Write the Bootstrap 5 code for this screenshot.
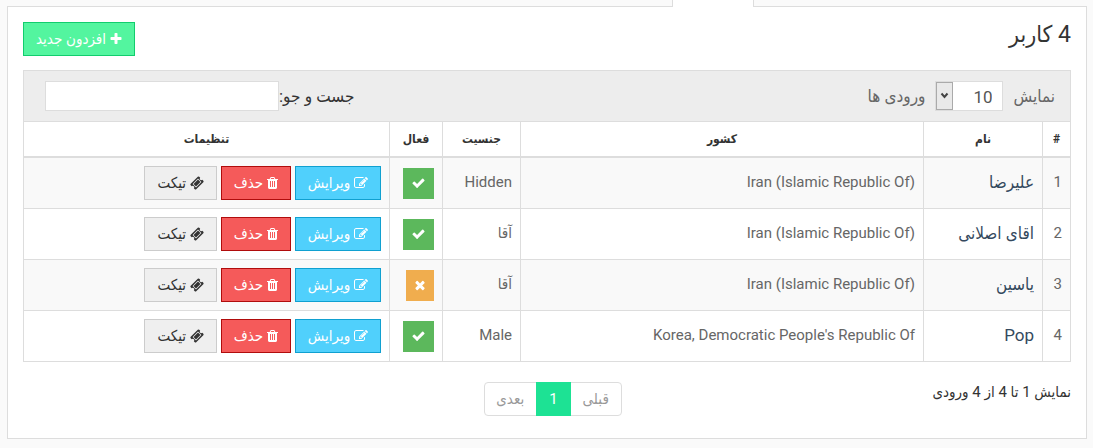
<!DOCTYPE html>
<html lang="fa" dir="rtl">
<head>
<meta charset="utf-8">
<meta name="viewport" content="width=device-width, initial-scale=1">
<title>کاربران</title>
<link href="https://cdn.jsdelivr.net/npm/bootstrap@5.3.0/dist/css/bootstrap.min.css" rel="stylesheet">
<style>
body { font-family: Roboto, "DejaVu Sans Condensed", "DejaVu Sans", sans-serif; font-size: 15px; line-height: 20px; color: #333; background: #fafafa; }
.tab-strip { height: 7px; padding-right: 339px; margin-bottom: -1px; position: relative; }
.tab-strip a { display: block; width: 82px; background: #fff; border: solid #ddd; border-width: 0 1px; }
.panel { border: 1px solid #ddd; background: #fff; padding: 10px 15px 22px; margin: 0 6px 9px 7px; }
.panel h1 { font-size: 23px; line-height: 34px; font-weight: 400; }
.ico { height: 14px; fill: currentColor; vertical-align: -2px; }
.btn { --bs-btn-border-radius: 0; --bs-btn-padding-x: 12px; --bs-btn-padding-y: 6px; --bs-btn-font-size: 15px; --bs-btn-line-height: 20px; height: 34px; white-space: nowrap; }
.btn-add { --bs-btn-color: #fff; --bs-btn-bg: #53f59f; --bs-btn-border-color: #11cd6d; --bs-btn-hover-color: #fff; --bs-btn-hover-bg: #2fe585; }
.btn-edit { --bs-btn-color: #fff; --bs-btn-bg: #50d0fc; --bs-btn-border-color: #10a0d0; --bs-btn-hover-color: #fff; --bs-btn-hover-bg: #2bbff0; }
.btn-del { --bs-btn-color: #fff; --bs-btn-bg: #f55a5a; --bs-btn-border-color: #b00c0c; --bs-btn-hover-color: #fff; --bs-btn-hover-bg: #e03c3c; }
.btn-tick { --bs-btn-color: #333; --bs-btn-bg: #efefef; --bs-btn-border-color: #ccc; --bs-btn-hover-bg: #e0e0e0; }
.head-row { padding: 1px 0 14px; }
.head-row .btn { margin-top: 4px; }
.filters { background: #ededed; border: 1px solid #ddd; border-bottom: 0; padding: 10px 15px 10px 21px; font-size: 17px; }
.filters .length-label { color: #666; }
.filters select, .filters input { height: 30px; border: 1px solid #ddd; background-color: #fff; color: #555; }
.filters select { appearance: none; width: 68px; margin: 0 10px; padding: 2px 10px 0; font-size: 17px; background-repeat: no-repeat; background-position: left top; background-size: 17px 28px;
 background-image: url("data:image/svg+xml,%3Csvg xmlns='http://www.w3.org/2000/svg' width='17' height='28'%3E%3Crect x='.5' y='.5' width='16' height='27' fill='%23e9e9e9' stroke='%23aaa'/%3E%3Cpath d='M5.5 11.5l3 3.5 3-3.5' fill='none' stroke='%23444' stroke-width='2'/%3E%3C/svg%3E"); }
.filters input { width: 234px; }
.users { --bs-table-striped-bg: #f9f9f9; --bs-table-color: #666; --bs-table-striped-color: #666; --bs-table-bg: #fff; table-layout: fixed; min-width: 900px; border-color: #ddd; }
.users th, .users td { padding: 8px; border: 1px solid #ddd; }
.users thead th { text-align: center; font-size: 12px; line-height: 18px; padding: 8px 4px; border-bottom-width: 2px; color: #333; }
.users tbody td { line-height: 32px; height: 51px; }
.users .num { padding-left: 0; }
.c-num { width: 28px; } .c-name { width: 119px; } .c-sex { width: 78px; } .c-on { width: 53px; } .c-act { width: 366px; }
.users a.person { color: #34495e; font-size: 17px; text-decoration: none; }
.state { display: block; width: fit-content; height: 31px; padding: 0 8px; margin-top: 2px; color: #fff; line-height: 30px; }
.state.on { background: #5cb85c; } .state.off { background: #f0ad4e; }
.foot { --bs-gutter-x: 30px; }
.pagination { --bs-pagination-color: #999; --bs-pagination-font-size: 15px; --bs-pagination-padding-x: 12px; --bs-pagination-padding-y: 6px; border: 1px solid #ddd; border-radius: 4px; width: fit-content; }
.pagination .page-link { border-width: 0; border-radius: 0; margin: 0; background: none; }
.pagination .active .page-link { background: #1de294; border: 1px solid #1de294; margin: -1px 0; }
</style>
</head>
<body>
<svg class="d-none">
<symbol id="check" viewBox="0 0 1792 1792"><path d="M1671 566q0 40-28 68l-724 724-136 136q-28 28-68 28t-68-28l-136-136-362-362q-28-28-28-68t28-68l136-136q28-28 68-28t68 28l294 295 656-657q28-28 68-28t68 28l136 136q28 28 28 68z"/></symbol>
<symbol id="times" viewBox="192 0 1408 1792"><path d="M1490 1322q0 40-28 68l-136 136q-28 28-68 28t-68-28l-294-294-294 294q-28 28-68 28t-68-28l-136-136q-28-28-28-68t28-68l294-294-294-294q-28-28-28-68t28-68l136-136q28-28 68-28t68 28l294 294 294-294q28-28 68-28t68 28l136 136q28 28 28 68t-28 68l-294 294 294 294q28 28 28 68z"/></symbol>
<symbol id="plus" viewBox="192 0 1408 1792"><path d="M1600 736v192q0 40-28 68t-68 28h-416v416q0 40-28 68t-68 28h-192q-40 0-68-28t-28-68v-416h-416q-40 0-68-28t-28-68v-192q0-40 28-68t68-28h416v-416q0-40 28-68t68-28h192q40 0 68 28t28 68v416h416q40 0 68 28t28 68z"/></symbol>
<symbol id="edit" viewBox="0 0 1792 1792"><path d="M888 1184l116-116-152-152-116 116v56h96v96h56zm440-720q-16-16-33 1l-350 350q-17 17-1 33t33-1l350-350q17-17 1-33zm80 594v190q0 119-84.5 203.5t-203.5 84.5h-832q-119 0-203.5-84.5t-84.5-203.5v-832q0-119 84.5-203.5t203.5-84.5h832q63 0 117 25 15 7 18 23 3 17-9 29l-49 49q-14 14-32 8-23-6-45-6h-832q-66 0-113 47t-47 113v832q0 66 47 113t113 47h832q66 0 113-47t47-113v-126q0-13 9-22l64-64q15-15 35-7t20 29zm-96-738l288 288-672 672h-288v-288zm444 132l-92 92-288-288 92-92q28-28 68-28t68 28l152 152q28 28 28 68t-28 68z"/></symbol>
<symbol id="trash" viewBox="192 0 1408 1792"><path d="M704 1376v-704q0-14-9-23t-23-9h-64q-14 0-23 9t-9 23v704q0 14 9 23t23 9h64q14 0 23-9t9-23zm256 0v-704q0-14-9-23t-23-9h-64q-14 0-23 9t-9 23v704q0 14 9 23t23 9h64q14 0 23-9t9-23zm256 0v-704q0-14-9-23t-23-9h-64q-14 0-23 9t-9 23v704q0 14 9 23t23 9h64q14 0 23-9t9-23zm-544-992h448l-48-117q-7-9-17-11h-317q-10 2-17 11zm928 32v64q0 14-9 23t-23 9h-96v948q0 83-47 143.5t-113 60.5h-832q-66 0-113-58.5t-47-141.5v-952h-96q-14 0-23-9t-9-23v-64q0-14 9-23t23-9h309l70-167q15-37 54-63t79-26h320q40 0 79 26t54 63l70 167h309q14 0 23 9t9 23z"/></symbol>
<symbol id="ticket" viewBox="0 0 1792 1792"><path d="M1024 452l316 316-572 572-316-316zm-211 979l618-618q19-19 19-45t-19-45l-362-362q-18-18-45-18t-45 18l-618 618q-19 19-19 45t19 45l362 362q18 18 45 18t45-18zm889-637l-907 908q-37 37-90.5 37t-90.5-37l-126-125q56-56 56-136t-56-136-136-56-136 56l-125-126q-37-37-37-90.5t37-90.5l907-906q37-37 90.5-37t90.5 37l125 125q-56 56-56 136t56 136 136 56 136-56l126 125q37 37 37 90.5t-37 90.5z"/></symbol>
</svg>
<nav class="tab-strip d-flex" aria-label="زبانه‌ها"><a href="#users" aria-label="کاربران"></a></nav>
<main class="panel" id="users">
  <header class="head-row d-flex justify-content-between align-items-start">
    <h1 class="mb-0">4 کاربر</h1>
    <button type="button" class="btn btn-add"><svg class="ico" width="12"><use href="#plus"/></svg> افزدون جدید</button>
  </header>
  <div class="filters d-flex justify-content-between align-items-center">
    <label class="length-label d-flex align-items-center">نمایش <select aria-label="تعداد"><option>10</option><option>25</option><option>50</option></select> ورودی ها</label>
    <label class="d-flex align-items-center">جست و جو:<input type="search"></label>
  </div>
  <div class="table-responsive">
  <table class="table table-striped users mb-0">
    <colgroup><col class="c-num"><col class="c-name"><col><col class="c-sex"><col class="c-on"><col class="c-act"></colgroup>
    <thead><tr><th>#</th><th>نام</th><th>کشور</th><th>جنسیت</th><th>فعال</th><th>تنظیمات</th></tr></thead>
    <tbody>
      <tr><td class="num">1</td><td><a class="person" href="#">علیرضا</a></td><td><bdi>Iran (Islamic Republic Of)</bdi></td><td>Hidden</td>
        <td><span class="state on"><svg class="ico" width="15"><use href="#check"/></svg></span></td>
        <td><div class="d-flex gap-1"><button type="button" class="btn btn-edit"><svg class="ico" width="14"><use href="#edit"/></svg> ویرایش</button><button type="button" class="btn btn-del"><svg class="ico" width="11"><use href="#trash"/></svg> حذف</button><button type="button" class="btn btn-tick"><svg class="ico" width="14"><use href="#ticket"/></svg> تیکت</button></div></td></tr>
      <tr><td class="num">2</td><td><a class="person" href="#">اقای اصلانی</a></td><td><bdi>Iran (Islamic Republic Of)</bdi></td><td>آقا</td>
        <td><span class="state on"><svg class="ico" width="15"><use href="#check"/></svg></span></td>
        <td><div class="d-flex gap-1"><button type="button" class="btn btn-edit"><svg class="ico" width="14"><use href="#edit"/></svg> ویرایش</button><button type="button" class="btn btn-del"><svg class="ico" width="11"><use href="#trash"/></svg> حذف</button><button type="button" class="btn btn-tick"><svg class="ico" width="14"><use href="#ticket"/></svg> تیکت</button></div></td></tr>
      <tr><td class="num">3</td><td><a class="person" href="#">یاسین</a></td><td><bdi>Iran (Islamic Republic Of)</bdi></td><td>آقا</td>
        <td><span class="state off"><svg class="ico" width="12"><use href="#times"/></svg></span></td>
        <td><div class="d-flex gap-1"><button type="button" class="btn btn-edit"><svg class="ico" width="14"><use href="#edit"/></svg> ویرایش</button><button type="button" class="btn btn-del"><svg class="ico" width="11"><use href="#trash"/></svg> حذف</button><button type="button" class="btn btn-tick"><svg class="ico" width="14"><use href="#ticket"/></svg> تیکت</button></div></td></tr>
      <tr><td class="num">4</td><td><a class="person" href="#">Pop</a></td><td><bdi>Korea, Democratic People's Republic Of</bdi></td><td>Male</td>
        <td><span class="state on"><svg class="ico" width="15"><use href="#check"/></svg></span></td>
        <td><div class="d-flex gap-1"><button type="button" class="btn btn-edit"><svg class="ico" width="14"><use href="#edit"/></svg> ویرایش</button><button type="button" class="btn btn-del"><svg class="ico" width="11"><use href="#trash"/></svg> حذف</button><button type="button" class="btn btn-tick"><svg class="ico" width="14"><use href="#ticket"/></svg> تیکت</button></div></td></tr>
    </tbody>
  </table>
  </div>
  <footer class="row foot pt-3 mt-1">
    <div class="col-5">نمایش 1 تا 4 از 4 ورودی</div>
    <nav class="col-7" aria-label="صفحه‌ها"><ul class="pagination p-0 mb-0"><li class="page-item"><a class="page-link" href="#">قبلی</a></li><li class="page-item active"><a class="page-link" href="#">1</a></li><li class="page-item"><a class="page-link" href="#">بعدی</a></li></ul></nav>
  </footer>
</main>
<script src="https://cdn.jsdelivr.net/npm/bootstrap@5.3.0/dist/js/bootstrap.bundle.min.js"></script>
</body>
</html>
